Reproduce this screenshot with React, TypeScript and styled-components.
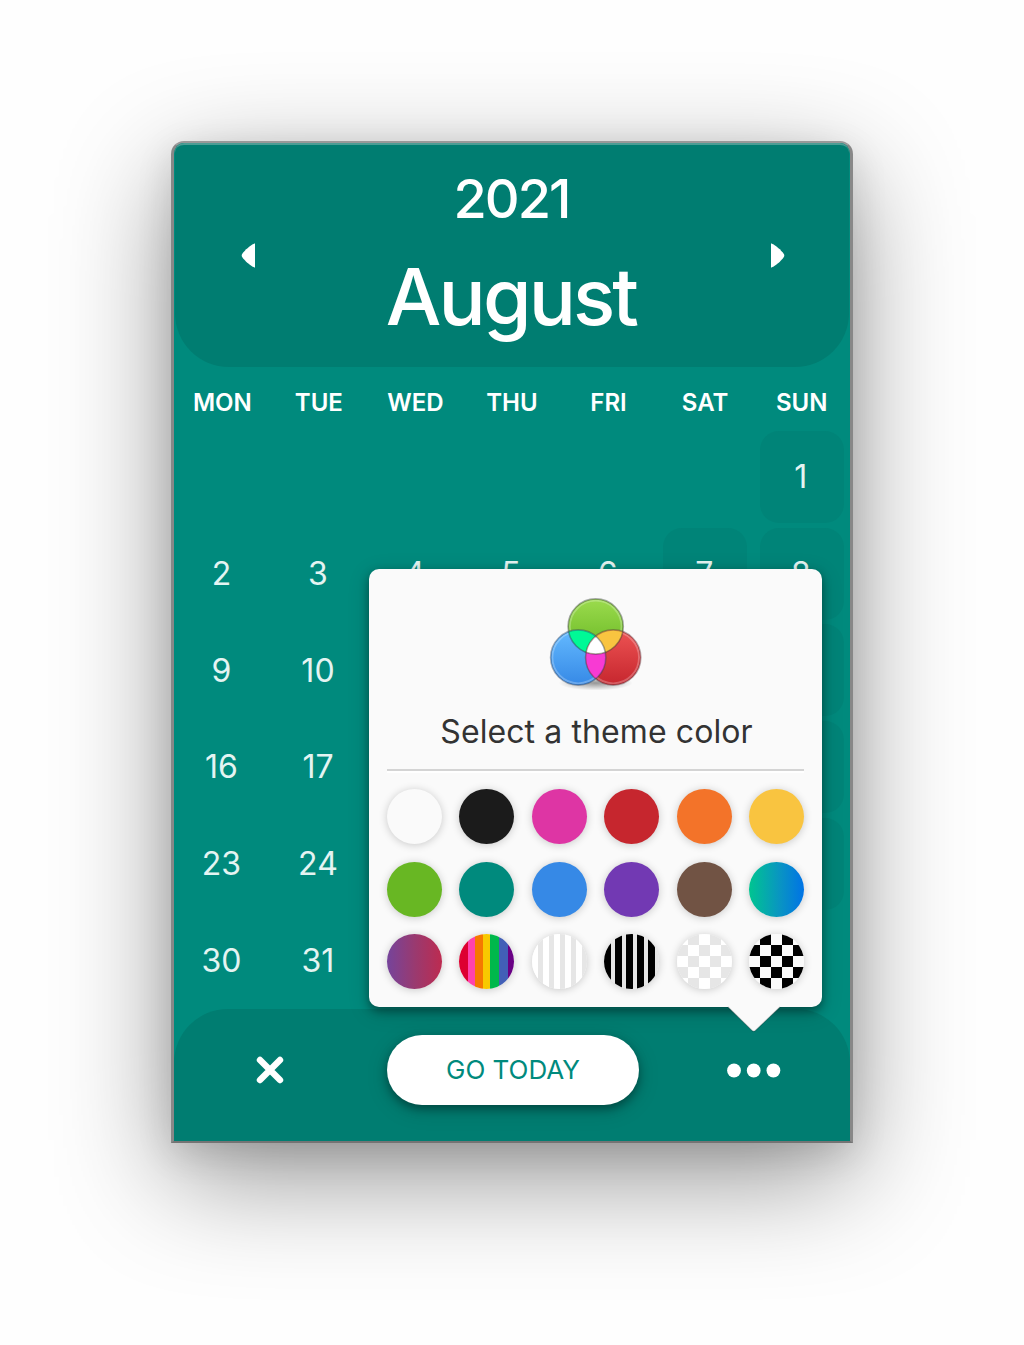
import React from 'react';
import styled, { createGlobalStyle, css } from 'styled-components';

const GlobalStyle = createGlobalStyle`
  *, *::before, *::after { box-sizing: border-box; }
  html, body { margin: 0; padding: 0; background: #fff; }
  body { font-family: Inter, "Liberation Sans", sans-serif; }
  button { border: 0; padding: 0; background: none; font: inherit; color: inherit; }
`;

const Stage = styled.main`
  width: 1024px;
  height: 1345px;
  padding: 141px 171px 0;
  overflow: hidden;
  background: #fefefe;
`;

const Window = styled.section`
  position: relative;
  display: flex;
  flex-direction: column;
  width: 682px;
  height: 1002px;
  border: solid #888;
  border-width: 2px 3px;
  border-top-color: #999;
  border-bottom-color: #747474;
  border-radius: 13px 13px 0 0;
  background: #008a7d;
  color: #fff;
  box-shadow:
    0 34px 112px rgba(0, 0, 0, 0.42),
    0 10px 36px rgba(0, 0, 0, 0.12);
`;

const Header = styled.header`
  display: grid;
  flex: none;
  grid-template-columns: 146px 1fr 145px;
  height: 224px;
  margin: 0 1px;
  border-top: 2px solid #4b9d95;
  border-radius: 9px 9px 54px 54px;
  background: #007d71;
`;

const ArrowButton = styled.button`
  height: 221px;
  display: grid;
  place-items: center;
`;

const Title = styled.div`
  display: flex;
  flex-direction: column;
  align-items: center;
`;

const Year = styled.div`
  margin-top: 21px;
  height: 66px;
  padding-right: 2px;
  font-size: 54px;
  line-height: 66px;
  font-weight: 450;
  letter-spacing: -2px;
`;

const Month = styled.h1`
  margin: 17px 0 0;
  height: 96px;
  font-size: 78.5px;
  line-height: 96px;
  font-weight: 480;
  letter-spacing: -2.9px;
  padding-right: 3px;
`;

const WeekRow = styled.div`
  display: grid;
  flex: none;
  grid-template-columns: repeat(7, 96.57px);
  height: 64px;
  padding-top: 17px;
`;

const Weekday = styled.span`
  text-align: center;
  font-size: 24px;
  line-height: 38px;
  font-weight: 600;
`;

const DayGrid = styled.div`
  display: grid;
  flex: none;
  height: 578px;
  grid-template-columns: repeat(7, 96.57px);
  grid-auto-rows: 96.7px;
`;

const Day = styled.div<{ $weekend: boolean; $covered: boolean }>`
  width: 84px;
  height: 92px;
  margin-left: 6.6px;
  padding: 0.4px 2.4px 0 0;
  border-radius: 19px;
  font-size: 32px;
  line-height: 92px;
  text-align: center;
  color: #e4f4f2;
  ${p => p.$weekend && css`background: #008478;`}

  span { display: ${p => (p.$covered ? 'none' : 'inline')}; }
`;

const Footer = styled.footer`
  display: grid;
  flex: none;
  grid-template-columns: 191px 296px 185px;
  align-items: center;
  height: 132px;
  padding-bottom: 10px;
  border-radius: 54px 54px 0 0;
  background: #007d71;
`;

const IconButton = styled.button`
  display: grid;
  place-items: center;
`;

const TodayButton = styled.button`
  justify-self: center;
  width: 252px;
  height: 70px;
  border-radius: 35px;
  background: #fff;
  color: #008a7d;
  font-size: 26px;
  line-height: 70px;
  box-shadow: 0 4px 10px rgba(0, 0, 0, 0.34), 0 5px 22px rgba(0, 0, 0, 0.16);
`;

const Popover = styled.aside`
  position: absolute;
  left: 195px;
  top: 426px;
  width: 453px;
  height: 438px;
  padding: 25px 18px 0;
  border-radius: 10px;
  background: #fafafa;
  color: #333;
  box-shadow: 0 4px 10px rgba(0, 0, 0, 0.38), 0 5px 22px rgba(0, 0, 0, 0.16);
`;

const PopoverIcon = styled.svg`
  display: block;
  margin: 0 auto;
`;

const PopoverTitle = styled.h2`
  margin: 17px 0 0;
  padding-left: 2px;
  font-size: 32px;
  font-weight: 400;
  line-height: 42px;
  letter-spacing: 0.1px;
  text-align: center;
  white-space: nowrap;
`;

const Divider = styled.hr`
  margin: 16px 0 16px;
  height: 4px;
  border: 0;
  border-top: 2px solid #d4d4d4;
  background: #fff;
`;

const Swatches = styled.div`
  display: grid;
  grid-template-columns: repeat(6, 55px);
  grid-auto-rows: 55px;
  justify-content: space-between;
  row-gap: 17.5px;
`;

const Swatch = styled.button<{ $fill: string }>`
  border-radius: 50%;
  background: ${p => p.$fill};
  box-shadow: 0 1px 9px rgba(0, 0, 0, 0.2);
`;

const Pointer = styled.svg`
  position: absolute;
  left: 357px;
  top: 437px;
`;

const weekdays = ['MON', 'TUE', 'WED', 'THU', 'FRI', 'SAT', 'SUN'];

const themes: [string, string][] = [
  ['White', '#fafafa'],
  ['Black', '#1b1b1b'],
  ['Pink', '#de35a4'],
  ['Red', '#c6262e'],
  ['Orange', '#f37329'],
  ['Yellow', '#f9c440'],
  ['Green', '#68b723'],
  ['Teal', '#008a7d'],
  ['Blue', '#3689e6'],
  ['Purple', '#7239b3'],
  ['Brown', '#715344'],
  ['Ocean', 'linear-gradient(90deg, #00c590 0%, #0993c4 58%, #0073e6 100%)'],
  ['Dusk', 'linear-gradient(90deg, #75449b 0%, #993a70 50%, #bd2b50 100%)'],
  ['Rainbow', 'linear-gradient(90deg, #dd0031 0 9px, #ff42ac 9px 16px, #f57900 16px 24px, #f8c900 24px 31px, #00b84b 31px 40px, #425fb7 40px 49px, #690084 49px)'],
  ['Light stripes', 'repeating-linear-gradient(90deg, #fff 0 6px, #e6e6e6 6px 11px)'],
  ['Dark stripes', 'repeating-linear-gradient(90deg, #000 0 7px, #e6e6e6 7px 11px)'],
  ['Light checks', 'conic-gradient(#e6e6e6 25%, #fff 0 50%, #e6e6e6 0 75%, #fff 0) 0 0 / 22px 22px'],
  ['Dark checks', 'conic-gradient(#000 25%, #fafafa 0 50%, #000 0 75%, #fafafa 0) 0 0 / 22px 22px'],
];

function ColorIcon() {
  const gloss = { fill: 'none', stroke: '#fff', strokeOpacity: 0.25, strokeWidth: 1.8 };
  const outline = { fill: 'none', strokeOpacity: 0.42, strokeWidth: 1.6 };
  return (
    <PopoverIcon width="100" height="100" viewBox="0.3 0 100 100">
      <defs>
        <linearGradient id="g" x1="0" y1="0" x2="0" y2="1"><stop stopColor="#9bdb4d" /><stop offset="1" stopColor="#68b723" /></linearGradient>
        <linearGradient id="b" x1="0" y1="0" x2="0" y2="1"><stop stopColor="#64baff" /><stop offset="1" stopColor="#3689e6" /></linearGradient>
        <linearGradient id="r" x1="0" y1="0" x2="0" y2="1"><stop stopColor="#ed5353" /><stop offset="1" stopColor="#c6262e" /></linearGradient>
        <radialGradient id="shade"><stop stopColor="#000" stopOpacity=".4" /><stop offset="1" stopColor="#000" stopOpacity="0" /></radialGradient>
        <clipPath id="cg"><circle cx="50" cy="32.5" r="27.5" /></clipPath>
        <clipPath id="cb"><circle cx="32.5" cy="63.5" r="27.5" /></clipPath>
        <clipPath id="cr"><circle cx="67.5" cy="63.5" r="27.5" /></clipPath>
      </defs>
      <ellipse cx="50" cy="89" rx="37" ry="7.5" fill="url(#shade)" />
      <circle cx="50" cy="32.5" r="27.5" fill="url(#g)" />
      <circle cx="50" cy="32.5" r="25.8" {...gloss} />
      <circle cx="32.5" cy="63.5" r="27.5" fill="url(#b)" />
      <circle cx="67.5" cy="63.5" r="27.5" fill="url(#r)" />
      <circle cx="32.5" cy="63.5" r="25.8" {...gloss} />
      <circle cx="67.5" cy="63.5" r="25.8" {...gloss} />
      <g clipPath="url(#cb)">
        <circle cx="50" cy="32.5" r="27.5" fill="#00f996" />
        <circle cx="67.5" cy="63.5" r="27.5" fill="#f83ad3" />
      </g>
      <g clipPath="url(#cg)">
        <g clipPath="url(#cr)">
          <rect width="100" height="100" fill="#f9c440" />
          <circle cx="32.5" cy="63.5" r="27.5" fill="#fff" />
        </g>
      </g>
      <circle cx="50" cy="32.5" r="27.6" stroke="#303a30" {...outline} />
      <circle cx="32.5" cy="63.5" r="27.6" stroke="#28415f" {...outline} />
      <circle cx="67.5" cy="63.5" r="27.6" stroke="#5a3036" {...outline} />
    </PopoverIcon>
  );
}

export default function App() {
  return (
    <>
      <GlobalStyle />
      <Stage>
        <Window>
          <Header>
            <ArrowButton aria-label="Previous month">
              <svg width="16" height="26" viewBox="0 0.5 16 26"><path d="M15 1C12 1 1.7 10 1.7 13S12 25 15 25Z" fill="#fff" /></svg>
            </ArrowButton>
            <Title>
              <Year>2021</Year>
              <Month>August</Month>
            </Title>
            <ArrowButton aria-label="Next month">
              <svg width="16" height="26" viewBox="-2 0.5 16 26"><path d="M0 1C3 1 13.3 10 13.3 13S3 25 0 25Z" fill="#fff" /></svg>
            </ArrowButton>
          </Header>
          <WeekRow>
            {weekdays.map(d => <Weekday key={d}>{d}</Weekday>)}
          </WeekRow>
          <DayGrid>
            {Array.from({ length: 37 }, (_, i) => {
              const n = i - 5;
              return (
                <Day key={i} $weekend={n > 0 && i % 7 > 4} $covered={i >= 14 && i % 7 > 1}>
                  {n > 0 && <span>{n}</span>}
                </Day>
              );
            })}
          </DayGrid>
          <Footer>
            <IconButton aria-label="Close">
              <svg width="30" height="30" viewBox="0 0 30 30"><path d="M5 5 25 25M25 5 5 25" stroke="#fff" strokeWidth="6.4" strokeLinecap="round" /></svg>
            </IconButton>
            <TodayButton>GO TODAY</TodayButton>
            <IconButton aria-label="Menu">
              <svg width="56" height="16" viewBox="0 -0.5 56 16" fill="#fff">
                <circle cx="8" cy="8" r="6.9" /><circle cx="27.7" cy="8" r="6.9" /><circle cx="47.4" cy="8" r="6.9" />
              </svg>
            </IconButton>
          </Footer>
          <Popover>
            <ColorIcon />
            <PopoverTitle>Select a theme color</PopoverTitle>
            <Divider />
            <Swatches>
              {themes.map(([name, fill]) => <Swatch key={name} aria-label={name} $fill={fill} />)}
            </Swatches>
            <Pointer width="56" height="28" viewBox="0 0 56 28">
              <path d="M2 0V1L26 24.5Q27.7 26 29.4 24.5L54 1V0Z" fill="#fafafa" />
              <path d="M2 1 26 24.5Q27.7 26 29.4 24.5L54 1" fill="none" stroke="#000" strokeOpacity=".2" strokeWidth="1.3" />
            </Pointer>
          </Popover>
        </Window>
      </Stage>
    </>
  );
}
